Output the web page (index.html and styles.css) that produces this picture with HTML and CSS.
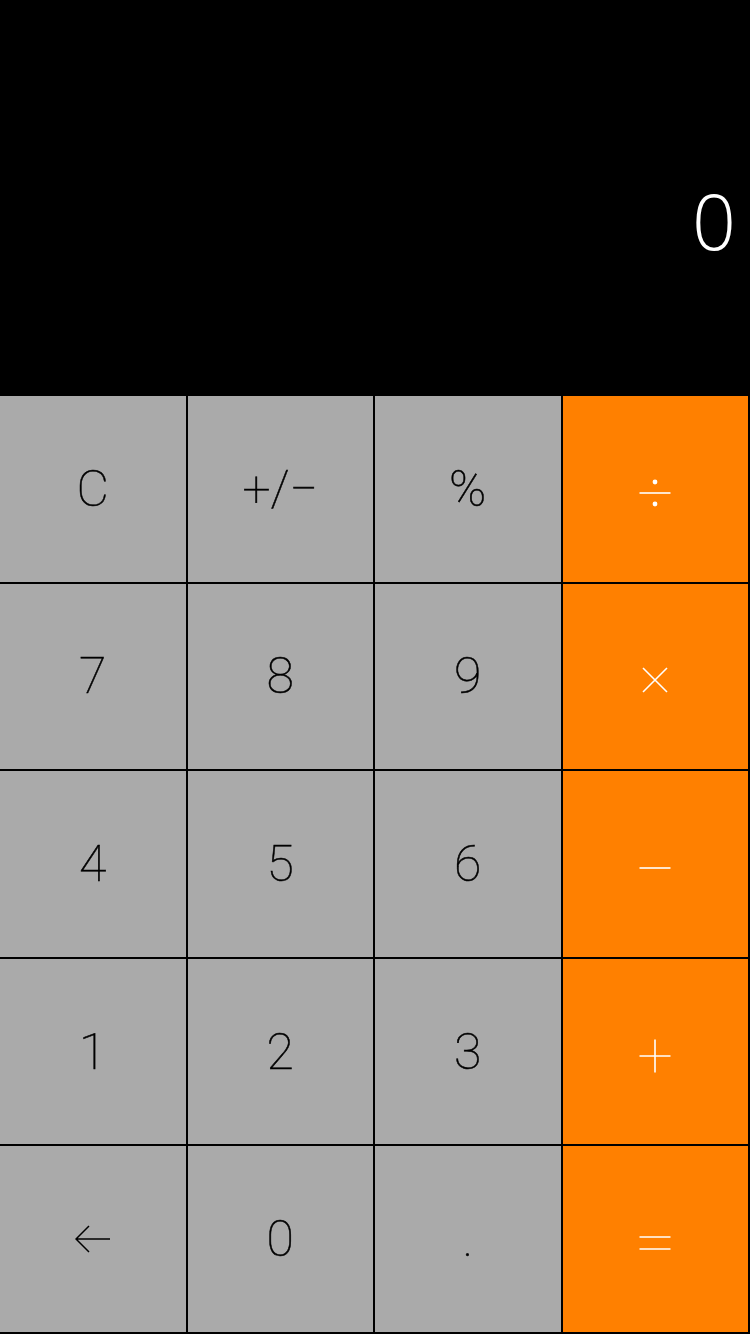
FILE: index.html
```html
<!DOCTYPE html>
<html lang="en">
<head>
  <meta charset="UTF-8">
  <meta name="viewport" content="width=device-width, initial-scale=1.0">
  <title>Calculator</title>
  <link rel="stylesheet" href="styles.css">
</head>
<body>
  <div class="calculator">
    <div class="display">
      <span id="result">0</span>
    </div>
    <div class="keypad">
      <button class="key">C</button>
      <button class="key">+/&minus;</button>
      <button class="key">%</button>
      <button class="key op" aria-label="divide">
        <svg width="34" height="34" viewBox="0 0 34 34">
          <path d="M1.5 17 H32.5" stroke="#fff" stroke-width="1.6"/>
          <circle cx="17" cy="6" r="2.4" fill="#fff"/>
          <circle cx="17" cy="28" r="2.4" fill="#fff"/>
        </svg>
      </button>

      <button class="key">7</button>
      <button class="key">8</button>
      <button class="key">9</button>
      <button class="key op" aria-label="multiply">
        <svg width="34" height="34" viewBox="0 0 34 34">
          <path d="M5 5 L29 29 M29 5 L5 29" stroke="#fff" stroke-width="1.6"/>
        </svg>
      </button>

      <button class="key">4</button>
      <button class="key">5</button>
      <button class="key">6</button>
      <button class="key op" aria-label="minus">
        <svg width="34" height="34" viewBox="0 0 34 34">
          <path d="M1.5 17 H32.5" stroke="#fff" stroke-width="1.6"/>
        </svg>
      </button>

      <button class="key">1</button>
      <button class="key">2</button>
      <button class="key">3</button>
      <button class="key op" aria-label="plus">
        <svg width="34" height="34" viewBox="0 0 34 34">
          <path d="M1.5 17 H32.5 M17 0.5 V33.5" stroke="#fff" stroke-width="1.6"/>
        </svg>
      </button>

      <button class="key back" aria-label="backspace">
        <svg width="36" height="30" viewBox="0 0 36 30">
          <path d="M14 2 L1 15 L14 28 M1 15 L35 15" fill="none" stroke="#000" stroke-width="1.5"/>
        </svg>
      </button>
      <button class="key">0</button>
      <button class="key">.</button>
      <button class="key op" aria-label="equals">
        <svg width="34" height="34" viewBox="0 0 34 34">
          <path d="M1.5 11 H32.5 M1.5 23 H32.5" stroke="#fff" stroke-width="1.6"/>
        </svg>
      </button>
    </div>
  </div>
</body>
</html>
```

FILE: styles.css
```css
/* styles.css */

body {
  margin: 0;
  background-color: #000;
  font-family: 'Roboto', 'Liberation Sans', sans-serif;
}

.calculator {
  display: flex;
  flex-direction: column;
  width: 750px;
  height: 1334px;
}

.display {
  height: 396px;
  box-sizing: border-box;
  display: flex;
  justify-content: flex-end;
  align-items: flex-end;
  padding: 0 14px 137px 0;
  color: #fff;
  font-family: 'Open Sans', 'Roboto', sans-serif;
  font-size: 77px;
  font-weight: 300;
  line-height: 1;
}

.keypad {
  flex: 1;
  display: grid;
  grid-template-columns: repeat(4, 1fr);
  grid-template-rows: repeat(5, 1fr);
}

.key {
  box-sizing: border-box;
  display: flex;
  justify-content: center;
  align-items: center;
  margin: 0;
  padding: 0;
  background-color: #aaaaaa;
  color: #000;
  border: none;
  border-right: 2px solid #000;
  border-bottom: 2px solid #000;
  font-family: inherit;
  font-size: 50px;
  font-weight: 100;
  -webkit-text-stroke: 0.5px #000; /* entre thin e light */
  cursor: pointer;
}

.key.op {
  background-color: #ff8000;
}

.key.op svg {
  margin-top: 8px;
}
```
